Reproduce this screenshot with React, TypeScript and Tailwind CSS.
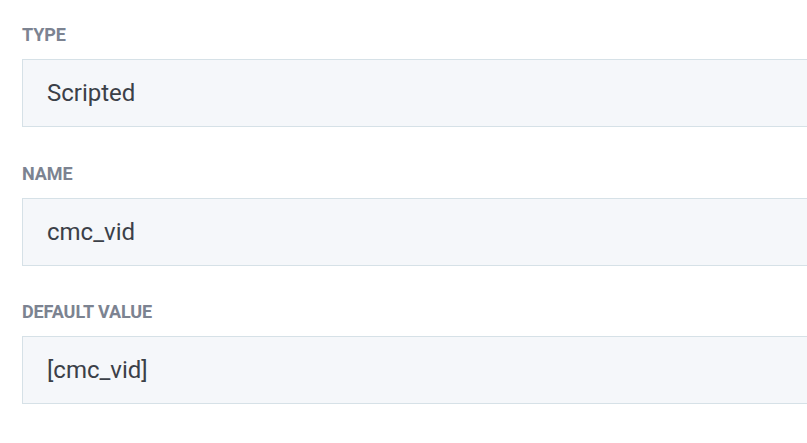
const fields = [
  { label: 'TYPE', value: 'Scripted' },
  { label: 'NAME', value: 'cmc_vid' },
  { label: 'DEFAULT VALUE', value: '[cmc_vid]' },
]

export default function App() {
  return (
    <div
      className="w-[807px] h-[443px] overflow-hidden bg-white pl-[22px] pt-[25px] flex flex-col gap-[36.5px]"
      style={{ fontFamily: 'Roboto, "Noto Sans", sans-serif' }}
    >
      {fields.map((f) => (
        <div key={f.label} className="flex flex-col">
          <div className="h-[20px] leading-[20px] text-[18px] font-bold text-[#7c8391] tracking-[-0.1px]">
            {f.label}
          </div>
          <div className="mt-[14px] h-[68px] w-[820px] shrink-0 bg-[#f5f7fa] border border-[#d6e1e7] flex items-center pl-[24px]">
            <span className="text-[24px] text-[#3b4048]">{f.value}</span>
          </div>
        </div>
      ))}
    </div>
  )
}
